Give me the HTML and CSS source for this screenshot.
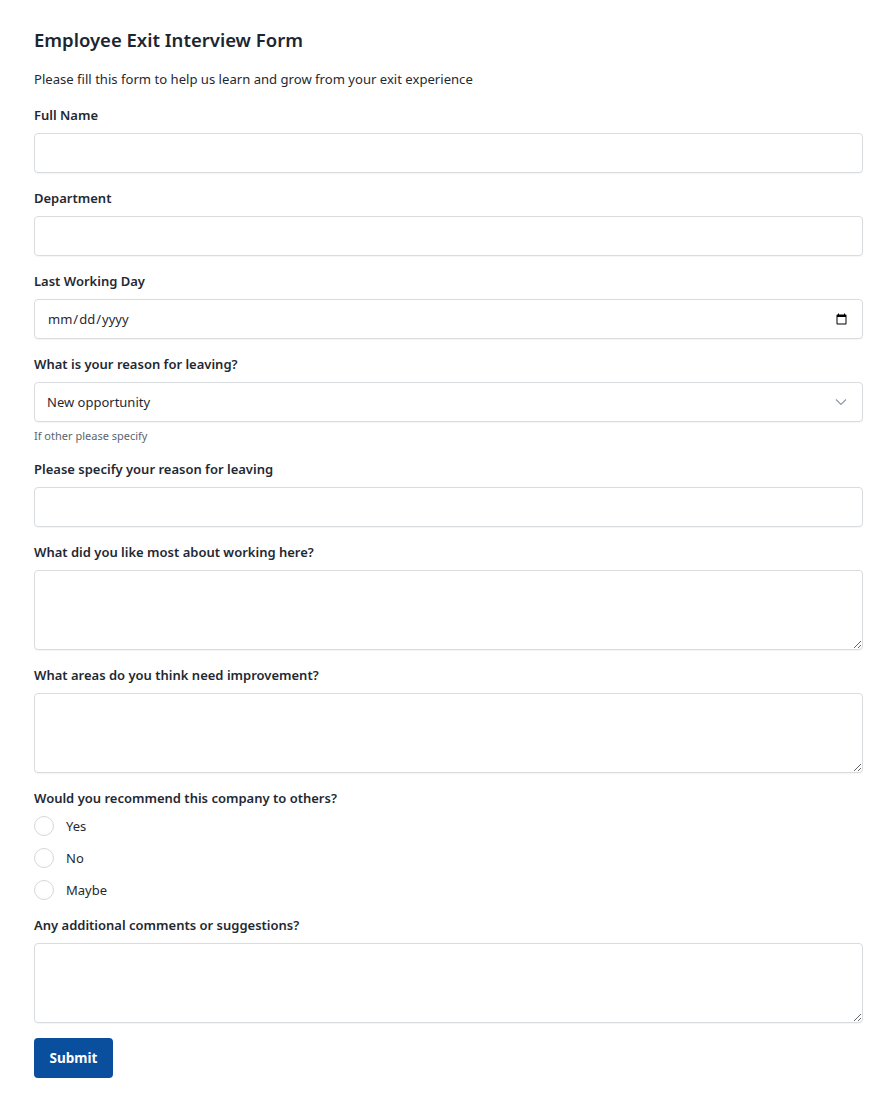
FILE: index.html
```html
<!DOCTYPE html>
<html lang="en">
<head>
<meta charset="utf-8">
<title>Employee Exit Interview Form</title>
<link rel="stylesheet" href="styles.css">
</head>
<body>
<form class="form">
  <h1 class="title">Employee Exit Interview Form</h1>
  <p class="intro">Please fill this form to help us learn and grow from your exit experience</p>

  <div class="group">
    <label class="label" for="name">Full Name</label>
    <input class="control" id="name" type="text">
  </div>

  <div class="group">
    <label class="label" for="dept">Department</label>
    <input class="control" id="dept" type="text">
  </div>

  <div class="group">
    <label class="label" for="day">Last Working Day</label>
    <input class="control" id="day" type="date">
  </div>

  <div class="group">
    <label class="label" for="reason">What is your reason for leaving?</label>
    <select class="control select" id="reason">
      <option>New opportunity</option>
      <option>Relocation</option>
      <option>Other</option>
    </select>
    <div class="help">If other please specify</div>
  </div>

  <div class="group">
    <label class="label" for="specify">Please specify your reason for leaving</label>
    <input class="control" id="specify" type="text">
  </div>

  <div class="group">
    <label class="label" for="like">What did you like most about working here?</label>
    <textarea class="control area" id="like"></textarea>
  </div>

  <div class="group">
    <label class="label" for="improve">What areas do you think need improvement?</label>
    <textarea class="control area" id="improve"></textarea>
  </div>

  <div class="group">
    <div class="label">Would you recommend this company to others?</div>
    <div class="radios">
      <label class="radio"><input type="radio" name="rec"><span>Yes</span></label>
      <label class="radio"><input type="radio" name="rec"><span>No</span></label>
      <label class="radio"><input type="radio" name="rec"><span>Maybe</span></label>
    </div>
  </div>

  <div class="group">
    <label class="label" for="comments">Any additional comments or suggestions?</label>
    <textarea class="control area" id="comments"></textarea>
  </div>

  <button class="submit" type="submit">Submit</button>
</form>
</body>
</html>
```
FILE: styles.css
```css
* { box-sizing: border-box; }

body {
  margin: 0;
  background: #ffffff;
  color: #1f2933;
  font-family: "Noto Sans", "Open Sans", sans-serif;
}

.form {
  width: 829px;
  margin-left: 34px;
  padding-top: 26px;
  padding-bottom: 21px;
}

.title {
  margin: 0;
  font-size: 18.5px;
  line-height: 28px;
  font-weight: 600;
  color: #1c2630;
}

.intro {
  margin: 15px 0 16px;
  font-size: 13.1px;
  line-height: 20px;
  color: #1f2933;
}

.group {
  display: flex;
  flex-direction: column;
  margin-bottom: 15px;
}

.label {
  display: block;
  font-size: 13px;
  line-height: 20px;
  font-weight: 600;
  color: #1f2933;
  margin-bottom: 8px;
}

.control {
  width: 100%;
  height: 40px;
  border: 1px solid #d9dcdf;
  border-radius: 4px;
  background: #fff;
  padding: 0 12px;
  font-family: inherit;
  font-size: 13px;
  color: #1f2933;
  box-shadow: 0 1px 1px rgba(0, 0, 0, 0.04);
  outline: none;
  margin: 0;
}

.select {
  appearance: none;
  -webkit-appearance: none;
  background-image: url("data:image/svg+xml,%3Csvg xmlns='http://www.w3.org/2000/svg' width='12' height='8' viewBox='0 0 12 8'%3E%3Cpath d='M1 1.5l5 5 5-5' fill='none' stroke='%23909aa3' stroke-width='1.2'/%3E%3C/svg%3E");
  background-repeat: no-repeat;
  background-position: right 15px center;
}

.area {
  height: 80px;
  resize: vertical;
  padding: 8px 12px;
}

.help {
  margin-top: 6px;
  font-size: 11px;
  line-height: 16px;
  color: #5b6670;
}

.radios {
  display: flex;
  flex-direction: column;
  gap: 12px;
}

.radio {
  display: flex;
  align-items: center;
  height: 20px;
  font-size: 13px;
  color: #1f2933;
}

.radio input {
  appearance: none;
  -webkit-appearance: none;
  width: 20px;
  height: 20px;
  margin: 0 12px 0 0;
  border: 1px solid #d5d8db;
  border-radius: 50%;
  background: #fff;
}

.submit {
  display: block;
  width: 79px;
  height: 40px;
  border: none;
  border-radius: 4px;
  background: #0a4f9e;
  color: #fff;
  font-family: inherit;
  font-size: 13.5px;
  font-weight: 700;
  cursor: pointer;
}
```
